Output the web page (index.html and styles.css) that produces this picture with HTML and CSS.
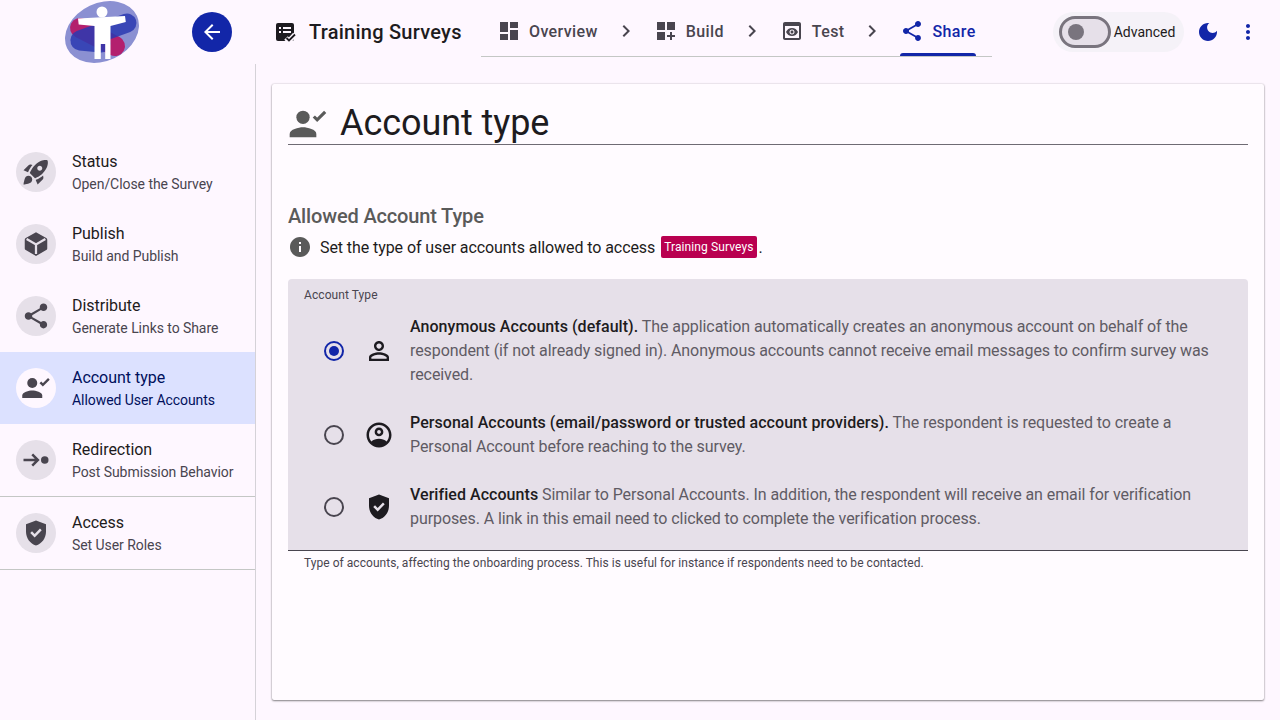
FILE: index.html
```html
<!DOCTYPE html>
<html lang="en">

<head>
    <meta charset="UTF-8">
    <meta name="viewport" content="width=device-width, initial-scale=1.0">
    <title>Training Surveys</title>
    <link rel="stylesheet" href="styles.css">
</head>

<body>
    <header class="topbar">
        <svg class="logo" viewBox="0 0 74 62">
            <ellipse cx="37" cy="31" rx="38.500" ry="29" transform="rotate(-25 37 31)" fill="#8b90d2"/>
            <path d="M15 27L50 45" fill="none" stroke="#b3206e" stroke-width="20" stroke-linecap="round"/>
            <path d="M15 39L62 22M15 40L36 42" fill="none" stroke="#2a3ab2" stroke-width="19" stroke-linecap="round" opacity=".85"/>
            <circle cx="37" cy="11" r="5.500" fill="#fff"/>
            <path d="M13 17.500l47-2.500.8 6-15.300 4V58h-5.300V43h-4.400v15H29.500V25l-15.800-1.500z" fill="#fff"/>
        </svg>
        <button class="backBtn">
            <svg viewBox="0 0 24 24"><path d="M20 11H7.830l5.590-5.590L12 4l-8 8 8 8 1.410-1.410L7.830 13H20v-2z"/></svg>
        </button>
        <div class="appTitle">
            <svg class="icon" viewBox="0 0 24 24">
                <rect x="3" y="3" width="18" height="18" rx="2"/>
                <path d="M6 7h2v2H6zm4 0h8v2h-8zm-4 4h2v2H6zm4 0h8v2h-8z" fill="#fef7ff"/>
                <path d="M13 18l3 3 6-6.500" fill="none" stroke="#fef7ff" stroke-width="5"/>
                <path d="M13.500 18l2.500 2.500 6-6" fill="none" stroke="#1d1b20" stroke-width="1.800"/>
            </svg>
            <span>Training Surveys</span>
        </div>
        <nav class="tabs">
            <a class="tab">
                <svg class="icon" viewBox="0 0 24 24"><path d="M3 13h8V3H3v10zm0 8h8v-6H3v6zm10 0h8V11h-8v10zm0-18v6h8V3h-8z"/></svg>
                Overview
            </a>
            <svg class="icon chevron" viewBox="0 0 24 24"><path d="M10 6 8.590 7.410 13.170 12l-4.580 4.590L10 18l6-6z"/></svg>
            <a class="tab">
                <svg class="icon" viewBox="0 0 24 24"><path d="M3 3h8v8H3zm10 0h8v8h-8zM3 13h8v8H3zm15 0h-2v3h-3v2h3v3h2v-3h3v-2h-3z"/></svg>
                Build
            </a>
            <svg class="icon chevron" viewBox="0 0 24 24"><path d="M10 6 8.590 7.410 13.170 12l-4.580 4.590L10 18l6-6z"/></svg>
            <a class="tab">
                <svg class="icon" viewBox="0 0 24 24"><path d="M19 3H5c-1.110 0-2 .9-2 2v14c0 1.100.89 2 2 2h14c1.100 0 2-.9 2-2V5c0-1.100-.89-2-2-2zm0 16H5V7h14v12zm-5.500-6c0 .83-.67 1.500-1.500 1.500s-1.500-.67-1.500-1.500.67-1.500 1.500-1.500 1.500.67 1.500 1.500zM12 9c-2.730 0-5.060 1.660-6 4 .94 2.340 3.270 4 6 4s5.060-1.660 6-4c-.94-2.340-3.270-4-6-4zm0 6.500c-1.380 0-2.500-1.120-2.500-2.500s1.120-2.500 2.500-2.500 2.500 1.120 2.500 2.500-1.120 2.500-2.500 2.500z"/></svg>
                Test
            </a>
            <svg class="icon chevron" viewBox="0 0 24 24"><path d="M10 6 8.590 7.410 13.170 12l-4.580 4.590L10 18l6-6z"/></svg>
            <a class="tab active">
                <svg class="icon" viewBox="0 0 24 24"><path d="M18 16.080c-.76 0-1.440.3-1.960.77L8.910 12.700c.05-.23.09-.46.09-.7s-.04-.47-.09-.7l7.050-4.110c.54.5 1.250.81 2.040.81 1.660 0 3-1.340 3-3s-1.340-3-3-3-3 1.340-3 3c0 .24.04.47.09.7L8.040 9.810C7.500 9.310 6.790 9 6 9c-1.660 0-3 1.340-3 3s1.340 3 3 3c.79 0 1.500-.31 2.040-.81l7.120 4.160c-.05.21-.08.43-.08.65 0 1.610 1.310 2.920 2.920 2.920 1.610 0 2.920-1.310 2.920-2.920s-1.310-2.920-2.920-2.920z"/></svg>
                Share
            </a>
        </nav>
        <div class="advanced">
            <span class="switch"><span class="thumb"></span></span>
            <span>Advanced</span>
        </div>
        <svg class="icon primary moon" viewBox="0 0 24 24"><path d="M12 3c-4.970 0-9 4.030-9 9s4.030 9 9 9 9-4.030 9-9c0-.46-.04-.92-.1-1.360-.98 1.370-2.580 2.260-4.400 2.260-2.980 0-5.400-2.420-5.400-5.400 0-1.810.89-3.420 2.260-4.400-.44-.06-.9-.1-1.360-.1z"/></svg>
        <svg class="icon primary more" viewBox="0 0 24 24"><path d="M12 8c1.100 0 2-.9 2-2s-.9-2-2-2-2 .9-2 2 .9 2 2 2zm0 2c-1.100 0-2 .9-2 2s.9 2 2 2 2-.9 2-2-.9-2-2-2zm0 6c-1.100 0-2 .9-2 2s.9 2 2 2 2-.9 2-2-.9-2-2-2z"/></svg>
    </header>

    <div class="page">
        <aside class="sidebar">
            <a class="navItem">
                <span class="avatar"><svg viewBox="0 0 24 24"><path d="M9.190 6.350c-2.040 2.290-3.440 5.580-3.570 5.890L2 10.690l4.050-4.050c.47-.47 1.150-.68 1.810-.55l1.330.26zM11.170 17s3.740-1.550 5.890-3.700c5.400-5.400 4.500-9.620 4.210-10.570-.95-.3-5.170-1.190-10.570 4.210C8.550 9.090 7 12.830 7 12.830L11.170 17zm6.480-2.190c-2.290 2.040-5.580 3.440-5.890 3.570L13.310 22l4.050-4.050c.47-.47.68-1.150.55-1.810l-.26-1.330zM9 18c0 .83-.34 1.580-.88 2.120C6.940 21.300 2 22 2 22s.7-4.940 1.880-6.120C4.420 15.340 5.170 15 6 15c1.660 0 3 1.340 3 3zm4-9c0-1.100.9-2 2-2s2 .9 2 2-.9 2-2 2-2-.9-2-2z"/></svg></span>
                <span class="navText"><b>Status</b><small>Open/Close the Survey</small></span>
            </a>
            <a class="navItem">
                <span class="avatar"><svg viewBox="0 0 24 24"><path d="M12 2.500l8.200 4.700a1.500 1.500 0 0 1 .8 1.300v7a1.500 1.500 0 0 1-.8 1.300L12 21.500l-8.200-4.700a1.500 1.500 0 0 1-.8-1.300v-7a1.500 1.500 0 0 1 .8-1.300z"/><path d="M4.500 8l7.500 4.300L19.500 8M12 12.300V20" fill="none" stroke="#e6e0e9" stroke-width="1.800"/></svg></span>
                <span class="navText"><b>Publish</b><small>Build and Publish</small></span>
            </a>
            <a class="navItem">
                <span class="avatar"><svg viewBox="0 0 24 24"><path d="M18 16.080c-.76 0-1.440.3-1.960.77L8.910 12.700c.05-.23.09-.46.09-.7s-.04-.47-.09-.7l7.050-4.110c.54.5 1.250.81 2.040.81 1.660 0 3-1.340 3-3s-1.340-3-3-3-3 1.340-3 3c0 .24.04.47.09.7L8.040 9.810C7.500 9.310 6.790 9 6 9c-1.660 0-3 1.340-3 3s1.340 3 3 3c.79 0 1.500-.31 2.040-.81l7.120 4.160c-.05.21-.08.43-.08.65 0 1.610 1.310 2.920 2.920 2.920 1.610 0 2.920-1.310 2.920-2.920s-1.310-2.920-2.920-2.920z"/></svg></span>
                <span class="navText"><b>Distribute</b><small>Generate Links to Share</small></span>
            </a>
            <a class="navItem selected">
                <span class="avatar"><svg viewBox="0 0 24 24"><circle cx="9" cy="8" r="4"/><path d="M1 20v-2c0-2.660 5.330-4 8-4s8 1.340 8 4v2z"/><path d="M15.500 7.500l2 2 4.800-4.800" fill="none" stroke="#49454f" stroke-width="1.900"/></svg></span>
                <span class="navText"><b>Account type</b><small>Allowed User Accounts</small></span>
            </a>
            <a class="navItem">
                <span class="avatar"><svg viewBox="0 0 24 24"><path d="M2 12h11M9 7.500l4.500 4.500L9 16.500" fill="none" stroke="#49454f" stroke-width="2"/><circle cx="19" cy="12" r="3"/></svg></span>
                <span class="navText"><b>Redirection</b><small>Post Submission Behavior</small></span>
            </a>
            <a class="navItem divided">
                <span class="avatar"><svg viewBox="0 0 24 24"><path d="M12 2 4 5v6.090c0 5.050 3.410 9.760 8 10.910 4.590-1.150 8-5.860 8-10.910V5l-8-3zm-1.060 13.540L7.400 12l1.410-1.410 2.120 2.120 4.240-4.240 1.410 1.410-5.640 5.660z"/></svg></span>
                <span class="navText"><b>Access</b><small>Set User Roles</small></span>
            </a>
        </aside>

        <main class="main">
            <section class="card">
                <h1 class="pageTitle">
                    <svg viewBox="0 0 24 24"><circle cx="9" cy="8" r="4"/><path d="M1 20v-2c0-2.660 5.330-4 8-4s8 1.340 8 4v2z"/><path d="M15.500 7.500l2 2 4.800-4.800" fill="none" stroke="#5a5a5a" stroke-width="1.900"/></svg>
                    <span>Account type</span>
                </h1>

                <h2 class="sectionTitle">Allowed Account Type</h2>
                <p class="infoLine">
                    <svg viewBox="0 0 24 24"><path d="M12 2C6.480 2 2 6.480 2 12s4.480 10 10 10 10-4.480 10-10S17.520 2 12 2zm1 15h-2v-6h2v6zm0-8h-2V7h2v2z"/></svg>
                    <span>Set the type of user accounts allowed to access</span>
                    <span class="chip">Training Surveys</span><span class="dot">.</span>
                </p>

                <div class="field">
                    <div class="fieldLabel">Account Type</div>
                    <label class="option">
                        <span class="radio checked"></span>
                        <svg class="optIcon" viewBox="0 0 24 24"><path d="M12 5.900c1.160 0 2.100.94 2.100 2.100s-.94 2.100-2.100 2.100S9.900 9.160 9.900 8s.94-2.100 2.100-2.100m0 9c2.970 0 6.100 1.460 6.100 2.100v1.100H5.900V17c0-.64 3.130-2.100 6.100-2.100M12 4C9.790 4 8 5.790 8 8s1.790 4 4 4 4-1.790 4-4-1.790-4-4-4zm0 9c-2.670 0-8 1.340-8 4v3h16v-3c0-2.660-5.330-4-8-4z"/></svg>
                        <span class="optText"><b>Anonymous Accounts (default).</b> The application automatically creates an anonymous account on behalf of the respondent (if not already signed in). Anonymous accounts cannot receive email messages to confirm survey was received.</span>
                    </label>
                    <label class="option">
                        <span class="radio"></span>
                        <svg class="optIcon" viewBox="0 0 24 24"><path d="M12 2C6.480 2 2 6.480 2 12s4.480 10 10 10 10-4.480 10-10S17.520 2 12 2zm6.140 15.120C16.450 15.800 14.320 15 12 15s-4.450.8-6.140 2.120C4.700 15.730 4 13.950 4 12c0-4.420 3.580-8 8-8s8 3.580 8 8c0 1.950-.7 3.730-1.860 5.120zM12 6c-1.930 0-3.500 1.570-3.500 3.500S10.070 13 12 13s3.500-1.570 3.500-3.500S13.930 6 12 6zm0 5c-.83 0-1.500-.67-1.500-1.500S11.170 8 12 8s1.500.67 1.500 1.500S12.830 11 12 11z"/></svg>
                        <span class="optText"><b>Personal Accounts (email/password or trusted account providers).</b> The respondent is requested to create a Personal Account before reaching to the survey.</span>
                    </label>
                    <label class="option">
                        <span class="radio"></span>
                        <svg class="optIcon" viewBox="0 0 24 24"><path d="M12 2 4 5v6.090c0 5.050 3.410 9.760 8 10.910 4.590-1.150 8-5.860 8-10.910V5l-8-3zm-1.060 13.540L7.400 12l1.410-1.410 2.120 2.120 4.240-4.240 1.410 1.410-5.640 5.660z"/></svg>
                        <span class="optText"><b>Verified Accounts</b> Similar to Personal Accounts. In addition, the respondent will receive an email for verification purposes. A link in this email need to clicked to complete the verification process.</span>
                    </label>
                </div>
                <div class="helper">Type of accounts, affecting the onboarding process. This is useful for instance if respondents need to be contacted.</div>
            </section>
        </main>
    </div>
</body>

</html>
```

FILE: styles.css
```css
* {
    box-sizing: border-box;
}

html, body {
    height: 100%;
}

body {
    margin: 0;
    display: flex;
    flex-direction: column;
    overflow: hidden;
    font-family: Roboto, sans-serif;
    background: #fef7ff;
    color: #1d1b20;
}

svg {
    display: block;
    flex: none;
    fill: currentColor;
}

.icon {
    width: 24px;
    height: 24px;
    color: #49454f;
}

.icon.primary {
    color: #1226a8;
}

/* top bar */
.topbar {
    display: flex;
    align-items: center;
    height: 64px;
    flex: none;
    padding-left: 65px;
}

.logo {
    width: 74px;
    height: 62px;
    margin-right: 53px;
    overflow: visible;
}

.backBtn {
    width: 40px;
    height: 40px;
    padding: 8px;
    border: 0;
    border-radius: 50%;
    background: #1226a8;
    color: #fff;
}

.backBtn svg {
    width: 24px;
    height: 24px;
}

.appTitle {
    display: flex;
    align-items: center;
    gap: 12px;
    margin-left: 41px;
    font-size: 20px;
    font-weight: 500;
    letter-spacing: .25px;
    width: 208px;
}

.appTitle .icon {
    color: #1d1b20;
}

.tabs {
    display: flex;
    align-items: center;
    gap: 16px;
    height: 57px;
    margin-top: -7px;
    padding: 0 16px;
    border-bottom: 1px solid #c4c7c5;
}

.tabs .chevron {
    margin-top: 6px;
}

.tab {
    position: relative;
    display: flex;
    align-items: center;
    gap: 8px;
    height: 56px;
    padding-top: 6px;
    font-size: 16px;
    font-weight: 500;
    letter-spacing: .38px;
    color: #49454f;
}

.tab.active,
.tab.active .icon {
    color: #1226a8;
}

.tab.active::after {
    content: "";
    position: absolute;
    left: 0;
    right: 0;
    bottom: 0;
    height: 3px;
    border-radius: 3px 3px 0 0;
    background: #1226a8;
}

.advanced {
    display: flex;
    align-items: center;
    gap: 3px;
    height: 40px;
    margin-left: 61px;
    padding: 0 9px 0 6px;
    border-radius: 20px;
    background: #f5f2f8;
    font-size: 14px;
}

.switch {
    display: flex;
    align-items: center;
    width: 52px;
    height: 32px;
    padding-left: 6px;
    border: 3px solid #79747e;
    border-radius: 16px;
    background: #e6e0e9;
}

.thumb {
    width: 16px;
    height: 16px;
    border-radius: 50%;
    background: #79747e;
}

.moon {
    margin-left: 12px;
}

.more {
    margin-left: 16px;
}

/* sidebar */
.page {
    display: flex;
    flex: 1;
    min-height: 0;
}

.sidebar {
    width: 256px;
    flex: none;
    padding-top: 72px;
    border-right: 1px solid #d5d2d8;
}

.navItem {
    display: flex;
    align-items: center;
    gap: 16px;
    height: 72px;
    padding-left: 16px;
}

.navItem.divided {
    height: 74px;
    border-top: 1px solid #c4c7c5;
    border-bottom: 1px solid #c4c7c5;
}

.avatar {
    display: flex;
    align-items: center;
    justify-content: center;
    width: 40px;
    height: 40px;
    border-radius: 50%;
    background: #e6e0e9;
    color: #49454f;
}

.avatar svg {
    width: 30px;
    height: 30px;
}

.navText {
    display: flex;
    flex-direction: column;
}

.navText b {
    font-size: 16px;
    font-weight: 400;
    line-height: 24px;
    letter-spacing: -.03px;
}

.navText small {
    font-size: 14px;
    line-height: 20px;
    letter-spacing: -.06px;
    color: #49454f;
}

.navItem.selected {
    background: #dce1ff;
}

.navItem.selected .avatar {
    background: #fef7ff;
}

.navItem.selected b,
.navItem.selected small {
    color: #00105c;
}

/* content */
.main {
    flex: 1;
    padding: 20px 16px;
}

.card {
    height: 100%;
    padding: 16px;
    border-radius: 2px;
    background: #fffbff;
    box-shadow: 0 1px 2px rgba(0, 0, 0, .45), 0 0 2px rgba(0, 0, 0, .2);
}

.pageTitle {
    display: flex;
    align-items: center;
    gap: 12px;
    height: 45px;
    margin: 0 0 59px;
    border-bottom: 1px solid #6f6b74;
    font-size: 36px;
    font-weight: 400;
    letter-spacing: -.08px;
}

.pageTitle svg {
    width: 40px;
    height: 40px;
    margin-top: 4px;
    color: #5a5a5a;
}

.pageTitle span {
    padding-top: 2px;
}

.sectionTitle {
    margin: 0;
    font-size: 20px;
    line-height: 24px;
    font-weight: 500;
    letter-spacing: -.15px;
    color: #5a5a5a;
}

.infoLine {
    display: flex;
    align-items: center;
    height: 30px;
    margin: 4px 0 17px;
    font-size: 16px;
    letter-spacing: -.08px;
}

.infoLine svg {
    width: 24px;
    height: 24px;
    margin-right: 8px;
    color: #5a5a5a;
}

.chip {
    margin-left: 6px;
    padding: 0 3px;
    border-radius: 2px;
    background: #b90050;
    color: #fff;
    font-size: 12px;
    line-height: 22px;
    letter-spacing: .1px;
}

.dot {
    margin-left: 2px;
}

.field {
    height: 272px;
    border-radius: 4px 4px 0 0;
    border-bottom: 1px solid #49454f;
    background: #e6e0e9;
}

.fieldLabel {
    height: 36px;
    padding: 10px 16px 0;
    font-size: 12px;
    line-height: 12px;
    letter-spacing: .08px;
    color: #49454f;
}

.option {
    display: flex;
    align-items: center;
    margin-bottom: 24px;
    padding-left: 36px;
}

.radio {
    display: flex;
    align-items: center;
    justify-content: center;
    width: 20px;
    height: 20px;
    flex: none;
    border: 2px solid #49454f;
    border-radius: 50%;
}

.radio.checked {
    border-color: #1226a8;
}

.radio.checked::after {
    content: "";
    width: 10px;
    height: 10px;
    border-radius: 50%;
    background: #1226a8;
}

.optIcon {
    width: 30px;
    height: 30px;
    margin: 0 16px 0 20px;
    color: #1d1b20;
}

.optText {
    width: 816px;
    font-size: 16px;
    line-height: 24px;
    letter-spacing: -.08px;
    color: #5f5b64;
}

.optText b {
    font-weight: 500;
    letter-spacing: .05px;
    color: #1d1b20;
}

.helper {
    padding: 4px 16px 0;
    font-size: 12px;
    line-height: 16px;
    letter-spacing: .04px;
    color: #49454f;
}
```
